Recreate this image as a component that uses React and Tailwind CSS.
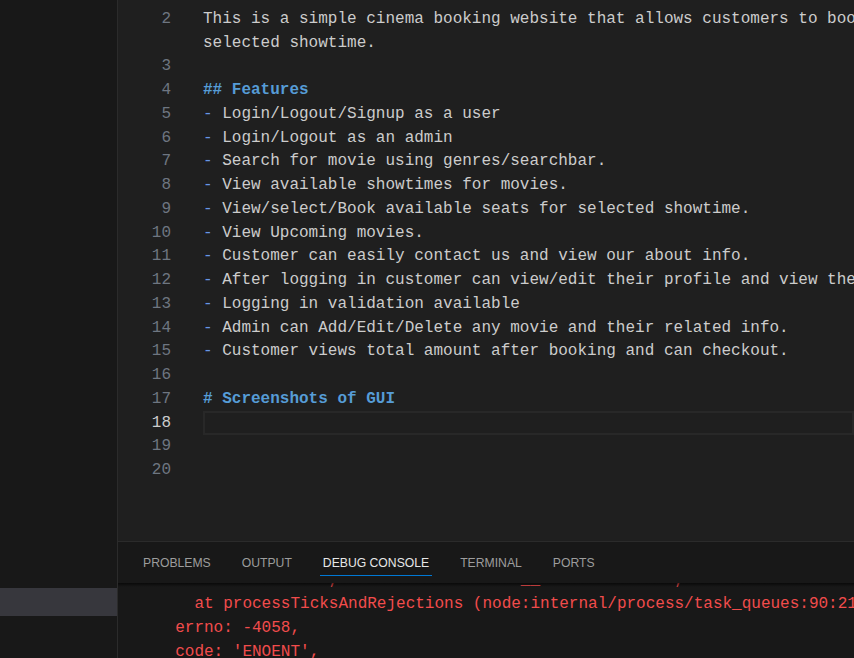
import React from 'react';

const mono = { fontFamily: '"Liberation Mono", "DejaVu Sans Mono", monospace' };

const lines = [
  { n: '2', text: 'This is a simple cinema booking website that allows customers to book seats for a selected' },
  { n: '', text: 'selected showtime.' },
  { n: '3', text: '' },
  { n: '4', heading: '## Features' },
  { n: '5', item: 'Login/Logout/Signup as a user' },
  { n: '6', item: 'Login/Logout as an admin' },
  { n: '7', item: 'Search for movie using genres/searchbar.' },
  { n: '8', item: 'View available showtimes for movies.' },
  { n: '9', item: 'View/select/Book available seats for selected showtime.' },
  { n: '10', item: 'View Upcoming movies.' },
  { n: '11', item: 'Customer can easily contact us and view our about info.' },
  { n: '12', item: 'After logging in customer can view/edit their profile and view their bookings.' },
  { n: '13', item: 'Logging in validation available' },
  { n: '14', item: 'Admin can Add/Edit/Delete any movie and their related info.' },
  { n: '15', item: 'Customer views total amount after booking and can checkout.' },
  { n: '16', text: '' },
  { n: '17', heading: '# Screenshots of GUI' },
  { n: '18', active: true },
  { n: '19', text: '' },
  { n: '20', text: '' },
];

const tabs = ['PROBLEMS', 'OUTPUT', 'DEBUG CONSOLE', 'TERMINAL', 'PORTS'];

const consoleLines = [
  '                  ,                   __              ,',
  '    at processTicksAndRejections (node:internal/process/task_queues:90:21)',
  '  errno: -4058,',
  "  code: 'ENOENT',",
];

function Line({ line }) {
  return (
    <div className="flex h-[23.75px] shrink-0 items-center">
      <div className={`w-[53px] shrink-0 text-right ${line.active ? 'text-[#cccccc]' : 'text-[#6e7681]'}`}>{line.n}</div>
      {line.active ? (
        <div className="ml-[32px] h-full flex-1 border-2 border-[#282828]" />
      ) : (
        <div className="ml-[32px] whitespace-pre text-[#cccccc]">
          {line.heading && <span className="font-bold text-[#569cd6]">{line.heading}</span>}
          {line.item && (
            <>
              <span className="text-[#6796e6]">- </span>
              {line.item}
            </>
          )}
          {line.text}
        </div>
      )}
    </div>
  );
}

export default function App() {
  return (
    <div className="flex h-[658px] w-[854px] overflow-hidden bg-[#1f1f1f]">
      <aside className="flex w-[118px] shrink-0 flex-col border-r border-[#2b2b2b] bg-[#181818]">
        <div className="h-[588px] shrink-0" />
        <div className="h-[28px] bg-[#37373d]" />
      </aside>

      <div className="flex min-w-0 flex-1 flex-col">
        <div className="flex h-[541px] shrink-0 flex-col overflow-hidden bg-[#1f1f1f] pt-[7px] text-[16px]" style={mono}>
          {lines.map((line, i) => (
            <Line key={i} line={line} />
          ))}
        </div>

        <div className="flex min-h-0 flex-1 flex-col border-t border-[#2b2b2b] bg-[#181818]">
          <div className="flex h-[41px] shrink-0 items-center gap-[31px] pl-[25px] pt-[2px] text-[12.2px]" style={{ fontFamily: '"Liberation Sans", Arial, sans-serif' }}>
            {tabs.map((t) => (
              <div key={t} className={`relative ${t === 'DEBUG CONSOLE' ? 'text-[#e7e7e7]' : 'text-[#9d9d9d]'}`}>
                {t}
                {t === 'DEBUG CONSOLE' && <div className="absolute left-[-3px] right-[-3px] top-[21px] h-px bg-[#0078d4]" />}
              </div>
            ))}
          </div>
          <div className="relative min-h-0 flex-1 overflow-hidden">
            <div className="mt-[-15px] pl-[38px] text-[16px] text-[#f14c4c]" style={mono}>
              {consoleLines.map((l, i) => (
                <div key={i} className="h-[24px] whitespace-pre leading-[24px]">{l}</div>
              ))}
            </div>
            <div className="absolute inset-x-0 top-0 h-[4px] bg-gradient-to-b from-black/60 to-transparent" />
          </div>
        </div>
      </div>
    </div>
  );
}
